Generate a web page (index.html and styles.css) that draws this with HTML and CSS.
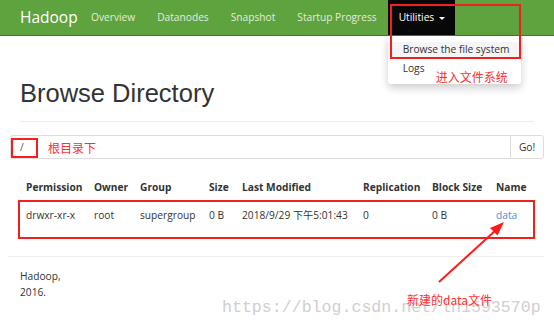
FILE: index.html
```html
<!DOCTYPE html>
<html>
<head>
<meta charset="utf-8">
<link rel="stylesheet" href="styles.css">
</head>
<body>
<nav class="navbar">
  <a class="brand">Hadoop</a>
  <a class="nav-link">Overview</a>
  <a class="nav-link">Datanodes</a>
  <a class="nav-link">Snapshot</a>
  <a class="nav-link">Startup Progress</a>
  <div class="nav-dropdown">
    <a class="nav-link active">Utilities <span class="caret"></span></a>
    <div class="dropdown-menu">
      <div class="dd-item hover">Browse the file system</div>
      <div class="dd-item">Logs</div>
    </div>
    <div class="anno-box anno-util"></div>
    <div class="anno-text anno-enter">进入文件系统</div>
  </div>
</nav>
<main class="container">
  <h1 class="title">Browse Directory</h1>
  <hr class="rule">
  <div class="input-group">
    <div class="path-input">/
      <div class="anno-box anno-root"></div>
      <span class="anno-text anno-rootlabel">根目录下</span>
    </div>
    <div class="go-btn">Go!</div>
  </div>
  <div class="table-wrap">
    <table class="listing">
      <colgroup>
        <col class="c1"><col class="c2"><col class="c3"><col class="c4"><col class="c5"><col class="c6"><col class="c7"><col class="c8">
      </colgroup>
      <thead>
        <tr><th>Permission</th><th>Owner</th><th>Group</th><th>Size</th><th>Last Modified</th><th>Replication</th><th>Block Size</th><th>Name</th></tr>
      </thead>
      <tbody>
        <tr><td>drwxr-xr-x</td><td>root</td><td>supergroup</td><td>0 B</td><td>2018/9/29 下午5:01:43</td><td>0</td><td>0 B</td><td><a class="link">data</a></td></tr>
      </tbody>
    </table>
    <div class="anno-box anno-row"></div>
  </div>
  <hr class="rule footer-rule">
  <footer class="footer">Hadoop,<br>2016.</footer>
  <svg class="arrow" width="120" height="80" viewBox="0 0 120 80">
    <line x1="7" y1="66" x2="64" y2="14" stroke="#ff1a1a" stroke-width="2"/>
    <polygon points="72,6 58,12 65.5,19.5" fill="#ff1a1a"/>
  </svg>
  <div class="anno-text anno-new">新建的data文件</div>
  <div class="watermark">https://blog.csdn.net/ln1593570p</div>
</main>
</body>
</html>
```
FILE: styles.css
```css
html, body {
  margin: 0;
  padding: 0;
  background: #fff;
}
body {
  font-family: "Open Sans", "Noto Sans CJK SC", sans-serif;
  font-size: 10.2px;
  color: #333;
  width: 554px;
  height: 329px;
  overflow: hidden;
  position: relative;
}
.navbar {
  height: 35px;
  background: #5fa33e;
  border-bottom: 1px solid #3f7a28;
  display: flex;
  align-items: stretch;
  padding-left: 20px;
}
.brand {
  color: #fff;
  font-size: 15.5px;
  line-height: 35px;
  width: 60px;
  flex: none;
}
.nav-link {
  color: #e3ecdf;
  font-size: 10.2px;
  line-height: 35px;
  padding: 0 11px;
  white-space: nowrap;
  display: block;
}
.nav-dropdown {
  position: relative;
  display: flex;
}
.nav-link.active {
  background: #080808;
  color: #fff;
  padding: 0 10px 0 11px;
}
.caret {
  display: inline-block;
  width: 0;
  height: 0;
  border-left: 3px solid transparent;
  border-right: 3px solid transparent;
  border-top: 3px solid #fff;
  vertical-align: middle;
  margin-left: 2px;
}
.dropdown-menu {
  position: absolute;
  left: 0;
  top: 36px;
  width: 133px;
  background: #fff;
  border-radius: 0 0 3px 3px;
  box-shadow: 0 4px 9px rgba(0,0,0,0.2);
  padding: 6px 0 4px;
  color: #333;
  font-size: 10.2px;
  z-index: 2;
}
.dd-item {
  padding: 0 15px;
  line-height: 15px;
  height: 15px;
  margin-bottom: 4px;
  white-space: nowrap;
}
.dd-item.hover {
  background: #f5f5f5;
}
.anno-box {
  position: absolute;
  border: 2px solid #f2201c;
  box-sizing: border-box;
  z-index: 3;
}
.anno-text {
  position: absolute;
  color: #ff3030;
  font-family: "Noto Sans CJK SC", sans-serif;
  font-size: 12px;
  line-height: 16px;
  white-space: nowrap;
  z-index: 3;
}
.anno-util {
  left: 2px;
  top: 4px;
  width: 131px;
  height: 55px;
}
.anno-enter {
  left: 48px;
  top: 69px;
}
.container {
  padding: 0 10px;
}
.title {
  margin: 0;
  padding: 42px 0 0 10px;
  font-family: "Liberation Sans", Arial, sans-serif;
  font-weight: 400;
  font-size: 25.5px;
  line-height: 30px;
  color: #333;
}
.rule {
  border: 0;
  border-top: 1px solid #eee;
  margin: 13px 10px 0 10px;
}
.input-group {
  display: flex;
  margin-top: 13px;
  height: 24px;
}
.path-input {
  position: relative;
  flex: 1;
  border: 1px solid #ddd;
  border-right: 0;
  border-radius: 3px 0 0 3px;
  line-height: 22px;
  padding-left: 9px;
  color: #555;
}
.anno-root {
  left: 0;
  top: 2px;
  width: 27px;
  height: 20px;
}
.anno-rootlabel {
  left: 37px;
  top: 4px;
}
.go-btn {
  width: 32px;
  border: 1px solid #ddd;
  border-radius: 0 3px 3px 0;
  text-align: center;
  line-height: 22px;
  color: #333;
}
.table-wrap {
  position: relative;
  margin-top: 18px;
  padding-left: 8px;
}
.listing {
  border-collapse: collapse;
  table-layout: fixed;
  width: 517px;
}
.c1 { width: 68px; }
.c2 { width: 46px; }
.c3 { width: 69px; }
.c4 { width: 33px; }
.c5 { width: 121px; }
.c6 { width: 69px; }
.c7 { width: 64px; }
.c8 { width: 47px; }
.listing th {
  font-weight: 700;
  text-align: left;
  padding: 0 8px;
  height: 20px;
  line-height: 20px;
  white-space: nowrap;
}
.listing td {
  padding: 0 8px;
  height: 34px;
  line-height: 20px;
  padding-top: 8px;
  vertical-align: top;
  white-space: nowrap;
}
.link {
  color: #4f8fd3;
}
.anno-row {
  left: 8px;
  top: 23px;
  width: 517px;
  height: 39px;
}
.footer-rule {
  margin: 17px 0 0 -2px;
}
.footer {
  padding: 11px 0 0 10px;
  line-height: 16px;
}
.arrow {
  position: absolute;
  left: 432px;
  top: 216px;
}
.anno-new {
  left: 407px;
  top: 292px;
  z-index: 4;
}
.watermark {
  position: absolute;
  left: 222px;
  top: 298px;
  font-family: "Liberation Mono", monospace;
  font-size: 16.6px;
  color: #d0d0d0;
  white-space: nowrap;
  z-index: 1;
}
```
